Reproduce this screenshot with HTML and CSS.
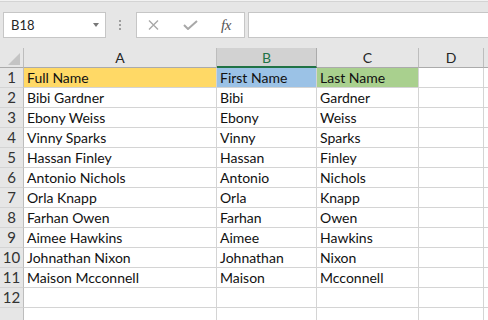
FILE: index.html
```html
<!DOCTYPE html>
<html>
<head>
<meta charset="utf-8">
<link rel="stylesheet" href="styles.css">
</head>
<body>
<div class="toolbar">
  <div class="namebox"><span class="ref">B18</span><span class="caret"></span></div>
  <div class="grip"><i></i><i></i><i></i></div>
  <div class="fxbtns">
    <svg class="ic-x" width="11" height="10" viewBox="0 0 11 10"><path d="M1 0.5 L10 9.5 M10 0.5 L1 9.5" stroke="#a8a8a8" stroke-width="1.4" fill="none"/></svg>
    <svg class="ic-ok" width="15" height="10" viewBox="0 0 15 10"><path d="M1 5 L5 9 L14 1" stroke="#a8a8a8" stroke-width="2" fill="none"/></svg>
    <span class="fx">fx</span>
  </div>
  <div class="formula"></div>
</div>
<div class="sheet">
  <div class="corner"><span class="tri"></span></div>
  <div class="ch">A</div><div class="ch sel">B</div><div class="ch">C</div><div class="ch">D</div><div class="ch end"></div>

  <div class="rh">1</div><div class="c gold">Full Name</div><div class="c blue">First Name</div><div class="c green">Last Name</div><div class="c"></div><div class="c end"></div>
  <div class="rh">2</div><div class="c">Bibi Gardner</div><div class="c">Bibi</div><div class="c">Gardner</div><div class="c"></div><div class="c end"></div>
  <div class="rh">3</div><div class="c">Ebony Weiss</div><div class="c">Ebony</div><div class="c">Weiss</div><div class="c"></div><div class="c end"></div>
  <div class="rh">4</div><div class="c">Vinny Sparks</div><div class="c">Vinny</div><div class="c">Sparks</div><div class="c"></div><div class="c end"></div>
  <div class="rh">5</div><div class="c">Hassan Finley</div><div class="c">Hassan</div><div class="c">Finley</div><div class="c"></div><div class="c end"></div>
  <div class="rh">6</div><div class="c">Antonio Nichols</div><div class="c">Antonio</div><div class="c">Nichols</div><div class="c"></div><div class="c end"></div>
  <div class="rh">7</div><div class="c">Orla Knapp</div><div class="c">Orla</div><div class="c">Knapp</div><div class="c"></div><div class="c end"></div>
  <div class="rh">8</div><div class="c">Farhan Owen</div><div class="c">Farhan</div><div class="c">Owen</div><div class="c"></div><div class="c end"></div>
  <div class="rh">9</div><div class="c">Aimee Hawkins</div><div class="c">Aimee</div><div class="c">Hawkins</div><div class="c"></div><div class="c end"></div>
  <div class="rh">10</div><div class="c">Johnathan Nixon</div><div class="c">Johnathan</div><div class="c">Nixon</div><div class="c"></div><div class="c end"></div>
  <div class="rh">11</div><div class="c">Maison Mcconnell</div><div class="c">Maison</div><div class="c">Mcconnell</div><div class="c"></div><div class="c end"></div>
  <div class="rh">12</div><div class="c"></div><div class="c"></div><div class="c"></div><div class="c"></div><div class="c end"></div>
  <div class="rh"></div><div class="c"></div><div class="c"></div><div class="c"></div><div class="c"></div><div class="c end"></div>
</div>
</body>
</html>
```
FILE: styles.css
```css
html, body {
  margin: 0;
  padding: 0;
}
body {
  width: 488px;
  height: 320px;
  overflow: hidden;
  background: #ffffff;
  font-family: Lato, "Liberation Sans", sans-serif;
  color: #000;
}
.toolbar {
  box-sizing: border-box;
  height: 48px;
  background: #e6e6e6;
  box-shadow: inset 0 1px 0 #f2f2f2, inset 0 2px 0 #d4d4d4;
  display: flex;
  align-items: flex-start;
  padding: 12px 0 0 3px;
}
.namebox {
  box-sizing: border-box;
  width: 103px;
  height: 26px;
  background: #fff;
  border: 1px solid #c6c6c6;
  display: flex;
  align-items: center;
  padding-left: 7px;
}
.ref {
  font-size: 13px;
  color: #262626;
}
.caret {
  margin-left: auto;
  margin-right: 6px;
  width: 0;
  height: 0;
  border-left: 3.5px solid transparent;
  border-right: 3.5px solid transparent;
  border-top: 4px solid #777;
}
.grip {
  box-sizing: border-box;
  width: 30px;
  padding: 8px 0 0 13px;
  display: flex;
  flex-direction: column;
  gap: 2px;
}
.grip i {
  display: block;
  width: 2px;
  height: 2px;
  background: #9e9e9e;
}
.fxbtns {
  box-sizing: border-box;
  width: 109px;
  height: 26px;
  background: #fff;
  border: 1px solid #c6c6c6;
  display: flex;
  align-items: center;
  padding-left: 11px;
}
.ic-ok {
  margin-left: 24px;
}
.fx {
  margin-left: 23px;
  font-family: "Liberation Serif", serif;
  font-style: italic;
  font-size: 15px;
  color: #555;
  letter-spacing: -0.5px;
}
.formula {
  flex: 1;
  height: 26px;
  box-sizing: border-box;
  margin-left: 3px;
  margin-right: -2px;
  background: #fff;
  border: 1px solid #c6c6c6;
}
.sheet {
  display: grid;
  grid-template-columns: 24px 193px 100px 102px 65px 1fr;
  grid-auto-rows: 20px;
  font-size: 14px;
}
.sheet > div {
  box-sizing: border-box;
  border-right: 1px solid #d4d4d4;
  border-bottom: 1px solid #d4d4d4;
}
.sheet > .end {
  border-right: none;
}
.corner {
  background: #e6e6e6;
  position: relative;
  border-right-color: #bdbdbd !important;
  border-bottom-color: #ababab !important;
}
.tri {
  position: absolute;
  right: 3px;
  bottom: 2px;
  width: 0;
  height: 0;
  border-left: 12px solid transparent;
  border-bottom: 12px solid #c4c4c4;
}
.sheet > .ch {
  background: #e6e6e6;
  border-right-color: #bdbdbd;
  border-bottom-color: #ababab;
  display: flex;
  align-items: center;
  justify-content: center;
  color: #262626;
  line-height: 19px;
}
.sheet > .ch.sel {
  background: #d2d2d2;
  color: #217346;
  border-bottom: 2px solid #217346;
  border-right-color: #ababab;
}
.sheet > .rh {
  background: #e6e6e6;
  border-right-color: #bdbdbd;
  border-bottom-color: #d4d4d4;
  text-align: center;
  color: #333;
  font-size: 15px;
  line-height: 19px;
}
.c {
  padding-left: 3px;
  line-height: 20px;
  white-space: nowrap;
  overflow: hidden;
  color: #111;
}
.gold { background: #ffd966; }
.blue { background: #9bc2e6; }
.green { background: #a9d08e; }
```
